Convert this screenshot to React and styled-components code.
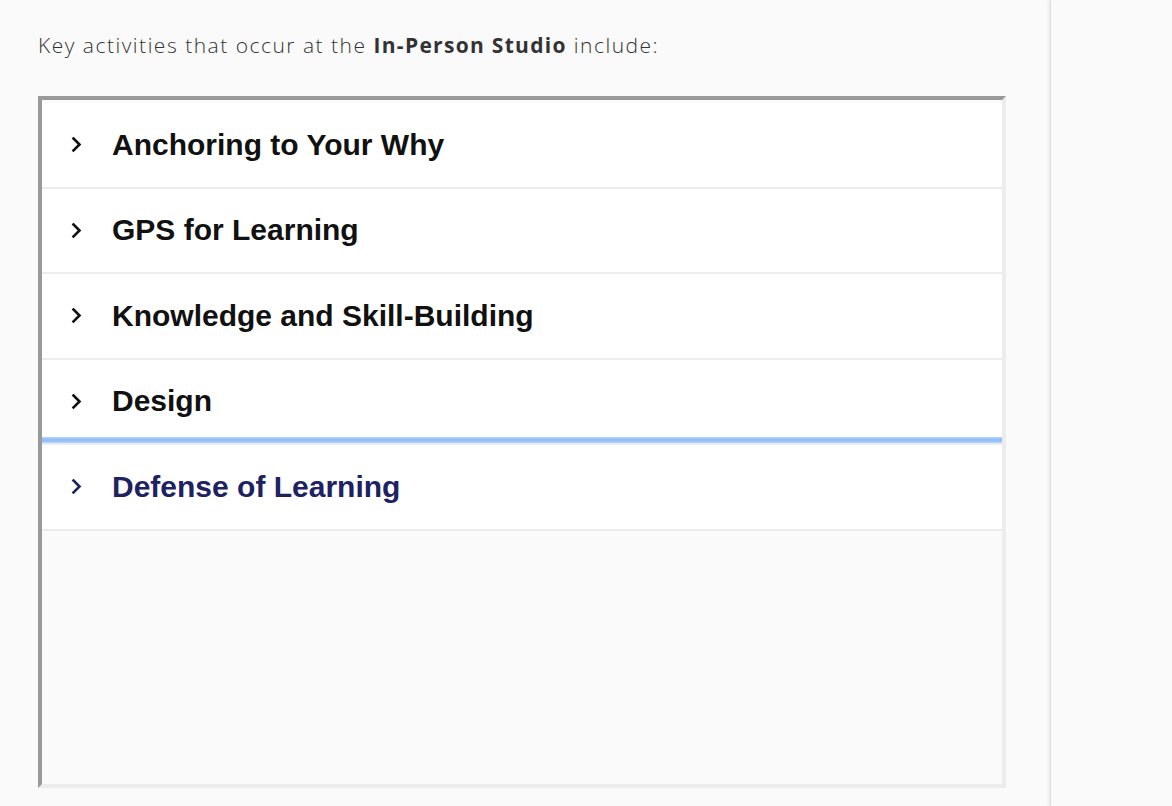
import React from "react";
import styled, { createGlobalStyle } from "styled-components";

const Global = createGlobalStyle`
  html, body { margin: 0; padding: 0; background: #fafafa; }
  body { font-family: "Open Sans", "Liberation Sans", sans-serif; }
`;

const Page = styled.div`
  display: flex;
  width: 1172px;
  height: 806px;
  overflow: hidden;
  background: #fafafa;
`;

const Main = styled.main`
  width: 1050px;
  flex: none;
  padding: 29px 0 0 38px;
  box-sizing: border-box;
`;

const Side = styled.aside`
  flex: 1;
  border-left: 1px solid #dedede;
  box-shadow: -2px 0 3px rgba(0, 0, 0, 0.06);
  background: #fafafa;
`;

const Intro = styled.p`
  margin: 0 0 35px 0;
  font-family: "Open Sans", sans-serif;
  font-weight: 300;
  font-size: 21px;
  line-height: 32px;
  color: #333;
  letter-spacing: 1.5px;

  strong {
    font-weight: 700;
    letter-spacing: 1.3px;
  }
`;

const Box = styled.div`
  width: 968px;
  height: 692px;
  box-sizing: border-box;
  border-style: solid;
  border-width: 4px;
  border-color: #999 #ececec #ececec #999;
  padding-top: 3px;
  background: #fafafa;
  display: flex;
  flex-direction: column;
`;

const Item = styled.button`
  position: relative;
  display: flex;
  align-items: center;
  gap: 29px;
  height: 85.5px;
  flex: none;
  box-sizing: border-box;
  padding: 0 0 0 29px;
  border: none;
  border-bottom: 2px solid #ececec;
  background: #fff;
  text-align: left;
  cursor: pointer;
  color: ${(p) => (p.$active ? "#1e2262" : "#111")};

  ${(p) =>
    p.$focused &&
    `
    &::before {
      content: "";
      position: absolute;
      left: 0;
      right: 0;
      top: -8px;
      height: 6px;
      background: linear-gradient(#b5d3fb, #8dbaf6 50%, #b5d3fb);
    }
  `}
`;

const Title = styled.span`
  font-family: "Liberation Sans", Arial, sans-serif;
  font-weight: 700;
  font-size: 30px;
  line-height: 1;
`;

const Chevron = () => (
  <svg width="12" height="17" viewBox="0 0 12 17" aria-hidden="true">
    <path
      d="M2.5 2.5 L8.5 8.5 L2.5 14.5"
      fill="none"
      stroke="currentColor"
      strokeWidth="2.6"
      strokeLinecap="square"
    />
  </svg>
);

const items = [
  "Anchoring to Your Why",
  "GPS for Learning",
  "Knowledge and Skill-Building",
  "Design",
  "Defense of Learning",
];

export default function App() {
  return (
    <>
      <Global />
      <Page>
        <Main>
          <Intro>
            Key activities that occur at the <strong>In-Person Studio</strong> include:
          </Intro>
          <Box>
            {items.map((t, i) => (
              <Item key={t} $active={i === 4} $focused={i === 4}>
                <Chevron />
                <Title>{t}</Title>
              </Item>
            ))}
          </Box>
        </Main>
        <Side />
      </Page>
    </>
  );
}
